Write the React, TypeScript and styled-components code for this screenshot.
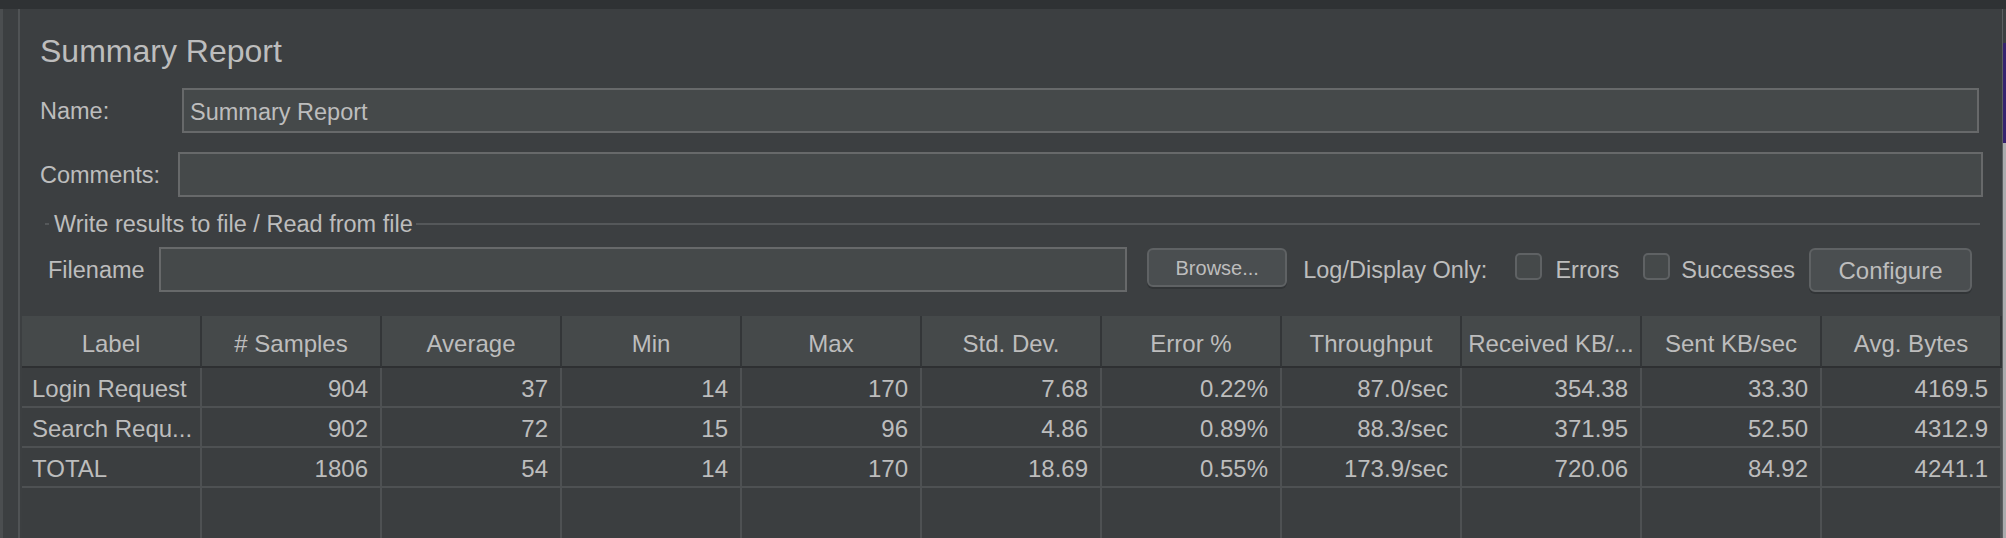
import * as React from "react";
import styled, { createGlobalStyle } from "styled-components";

const colors = {
    panel: "#3c3f41",
    strip: "#2f3234",
    text: "#bdbdbd",
    field: "#45494a",
    fieldBorder: "#67696a",
    button: "#4a4e50",
    buttonBorder: "#5f6264",
    head: "#45494a",
    headLine: "#333638",
    row: "#3b3e40",
    gridLine: "#4e5153",
};

const GlobalStyle = createGlobalStyle`
    html, body {
        margin: 0;
        height: 100%;
        background: ${colors.panel};
    }
    body {
        font-family: "Liberation Sans", Arial, sans-serif;
        color: ${colors.text};
        overflow: hidden;
    }
    #root {
        height: 100%;
    }
`;

const Frame = styled.div`
    display: flex;
    flex-direction: column;
    height: 100vh;
`;

const TopStrip = styled.div`
    height: 9px;
    flex: 0 0 auto;
    background: ${colors.strip};
`;

const Main = styled.div`
    display: flex;
    flex: 1 1 auto;
    min-height: 0;
`;

const Gutter = styled.div`
    width: 20px;
    flex: 0 0 auto;
    box-sizing: border-box;
    border-left: 3px solid #4b4e50;
    border-right: 2px solid #505355;
    box-shadow: inset 1px 0 0 ${colors.panel};
`;

const Panel = styled.div`
    flex: 1 1 auto;
    display: flex;
    flex-direction: column;
    min-width: 0;
`;

const RightRail = styled.div`
    width: 4px;
    flex: 0 0 auto;
    display: flex;
    flex-direction: column;
    box-sizing: border-box;
    border-left: 1px solid #5c5f61;
`;

const RailGap = styled.div`
    height: 34px;
`;

const RailThumb = styled.div`
    height: 100px;
    background: #36226f;
`;

const RailTrack = styled.div`
    flex: 1 1 auto;
    background: #a9abad;
`;

const Title = styled.div`
    margin: 22px 0 0 20px;
    font-size: 32px;
    line-height: 40px;
`;

const FieldRow = styled.div<{ $top: number; $right: number }>`
    display: flex;
    align-items: center;
    height: 45px;
    margin-top: ${p => p.$top}px;
    padding: 0 ${p => p.$right}px 0 20px;
`;

const FieldLabel = styled.div<{ $width: number }>`
    width: ${p => p.$width}px;
    flex: 0 0 auto;
    padding-top: 2px;
    font-size: 23.5px;
`;

const TextField = styled.input`
    flex: 1 1 auto;
    min-width: 0;
    height: 45px;
    box-sizing: border-box;
    margin: 0;
    padding: 3px 6px 0;
    background: ${colors.field};
    border: 2px solid ${colors.fieldBorder};
    border-radius: 0;
    outline: none;
    color: ${colors.text};
    font-family: inherit;
    font-size: 23.5px;
`;

const GroupTitle = styled.div`
    display: flex;
    align-items: center;
    margin: 14px 22px 0 25px;
    height: 26px;
`;

const GroupDash = styled.div`
    width: 4px;
    height: 2px;
    background: #55585a;
`;

const GroupText = styled.div`
    margin: 0 3px 0 5px;
    font-size: 23.5px;
    line-height: 26px;
`;

const GroupRule = styled.div`
    flex: 1 1 auto;
    height: 2px;
    background: #55585a;
`;

const FileRow = styled.div`
    display: flex;
    align-items: center;
    height: 45px;
    margin-top: 10px;
    padding: 0 30px 0 28px;
`;

const InlineLabel = styled.span<{ $gap: number }>`
    margin-left: ${p => p.$gap}px;
    padding-top: 2px;
    font-size: 23.5px;
    white-space: nowrap;
`;

const Button = styled.button<{ $gap: number; $width: number; $height: number; $size: number }>`
    flex: 0 0 auto;
    margin: 1px 0 0 ${p => p.$gap}px;
    width: ${p => p.$width}px;
    height: ${p => p.$height}px;
    align-self: flex-start;
    box-sizing: border-box;
    background: ${colors.button};
    border: 2px solid ${colors.buttonBorder};
    border-radius: 6px;
    box-shadow: 0 2px 0 #323537;
    color: ${colors.text};
    font-family: inherit;
    font-size: ${p => p.$size}px;
    padding: 2px 0 0;
`;

const CheckBox = styled.span<{ $gap: number }>`
    flex: 0 0 auto;
    margin: 0 0 7px ${p => p.$gap}px;
    width: 27px;
    height: 27px;
    box-sizing: border-box;
    background: ${colors.field};
    border: 2px solid ${colors.buttonBorder};
    border-radius: 5px;
`;

const Table = styled.div`
    flex: 1 1 auto;
    display: flex;
    flex-direction: column;
    margin: 24px 0 0 2px;
    min-height: 0;
`;

const GridRow = styled.div`
    display: grid;
    grid-template-columns: repeat(11, 180px);
`;

const FillerRow = styled(GridRow)`
    flex: 1 1 auto;
`;

const HeadCell = styled.div`
    height: 52px;
    box-sizing: border-box;
    padding-top: 6px;
    display: flex;
    align-items: center;
    justify-content: center;
    background: ${colors.head};
    border-right: 2px solid ${colors.headLine};
    border-bottom: 2px solid #2e3032;
    font-size: 24px;
    white-space: nowrap;
`;

const Cell = styled.div<{ $align: "left" | "right" }>`
    height: 40px;
    box-sizing: border-box;
    padding: 3px 12px 0 10px;
    display: flex;
    align-items: center;
    justify-content: ${p => (p.$align === "left" ? "flex-start" : "flex-end")};
    background: ${colors.row};
    border-right: 2px solid ${colors.gridLine};
    border-bottom: 2px solid ${colors.gridLine};
    font-size: 24px;
    white-space: nowrap;
    overflow: hidden;
`;

const EmptyCell = styled.div`
    box-sizing: border-box;
    background: ${colors.row};
    border-right: 2px solid ${colors.gridLine};
`;

const columns = [
    "Label", "# Samples", "Average", "Min", "Max", "Std. Dev.",
    "Error %", "Throughput", "Received KB/...", "Sent KB/sec", "Avg. Bytes",
];

const rows = [
    ["Login Request", "904", "37", "14", "170", "7.68", "0.22%", "87.0/sec", "354.38", "33.30", "4169.5"],
    ["Search Requ...", "902", "72", "15", "96", "4.86", "0.89%", "88.3/sec", "371.95", "52.50", "4312.9"],
    ["TOTAL", "1806", "54", "14", "170", "18.69", "0.55%", "173.9/sec", "720.06", "84.92", "4241.1"],
];

export default function App() {
    return (
        <Frame>
            <GlobalStyle />
            <TopStrip />
            <Main>
                <Gutter />
                <Panel>
                    <Title>Summary Report</Title>
                    <FieldRow $top={17} $right={23}>
                        <FieldLabel $width={142}>Name:</FieldLabel>
                        <TextField readOnly defaultValue="Summary Report" />
                    </FieldRow>
                    <FieldRow $top={19} $right={19}>
                        <FieldLabel $width={138}>Comments:</FieldLabel>
                        <TextField readOnly defaultValue="" />
                    </FieldRow>
                    <GroupTitle>
                        <GroupDash />
                        <GroupText>Write results to file / Read from file</GroupText>
                        <GroupRule />
                    </GroupTitle>
                    <FileRow>
                        <InlineLabel $gap={0}>Filename</InlineLabel>
                        <TextField readOnly defaultValue="" style={{ marginLeft: 14 }} />
                        <Button $gap={20} $width={140} $height={39} $size={20}>Browse...</Button>
                        <InlineLabel $gap={16}>Log/Display Only:</InlineLabel>
                        <CheckBox $gap={28} />
                        <InlineLabel $gap={13}>Errors</InlineLabel>
                        <CheckBox $gap={24} />
                        <InlineLabel $gap={11}>Successes</InlineLabel>
                        <Button $gap={14} $width={163} $height={44} $size={24}>Configure</Button>
                    </FileRow>
                    <Table>
                        <GridRow>
                            {columns.map(c => <HeadCell key={c}>{c}</HeadCell>)}
                        </GridRow>
                        {rows.map(r => (
                            <GridRow key={r[0]}>
                                {r.map((v, i) => (
                                    <Cell key={i} $align={i === 0 ? "left" : "right"}>{v}</Cell>
                                ))}
                            </GridRow>
                        ))}
                        <FillerRow>
                            {columns.map(c => <EmptyCell key={c} />)}
                        </FillerRow>
                    </Table>
                </Panel>
                <RightRail>
                    <RailGap />
                    <RailThumb />
                    <RailTrack />
                </RightRail>
            </Main>
        </Frame>
    );
}
